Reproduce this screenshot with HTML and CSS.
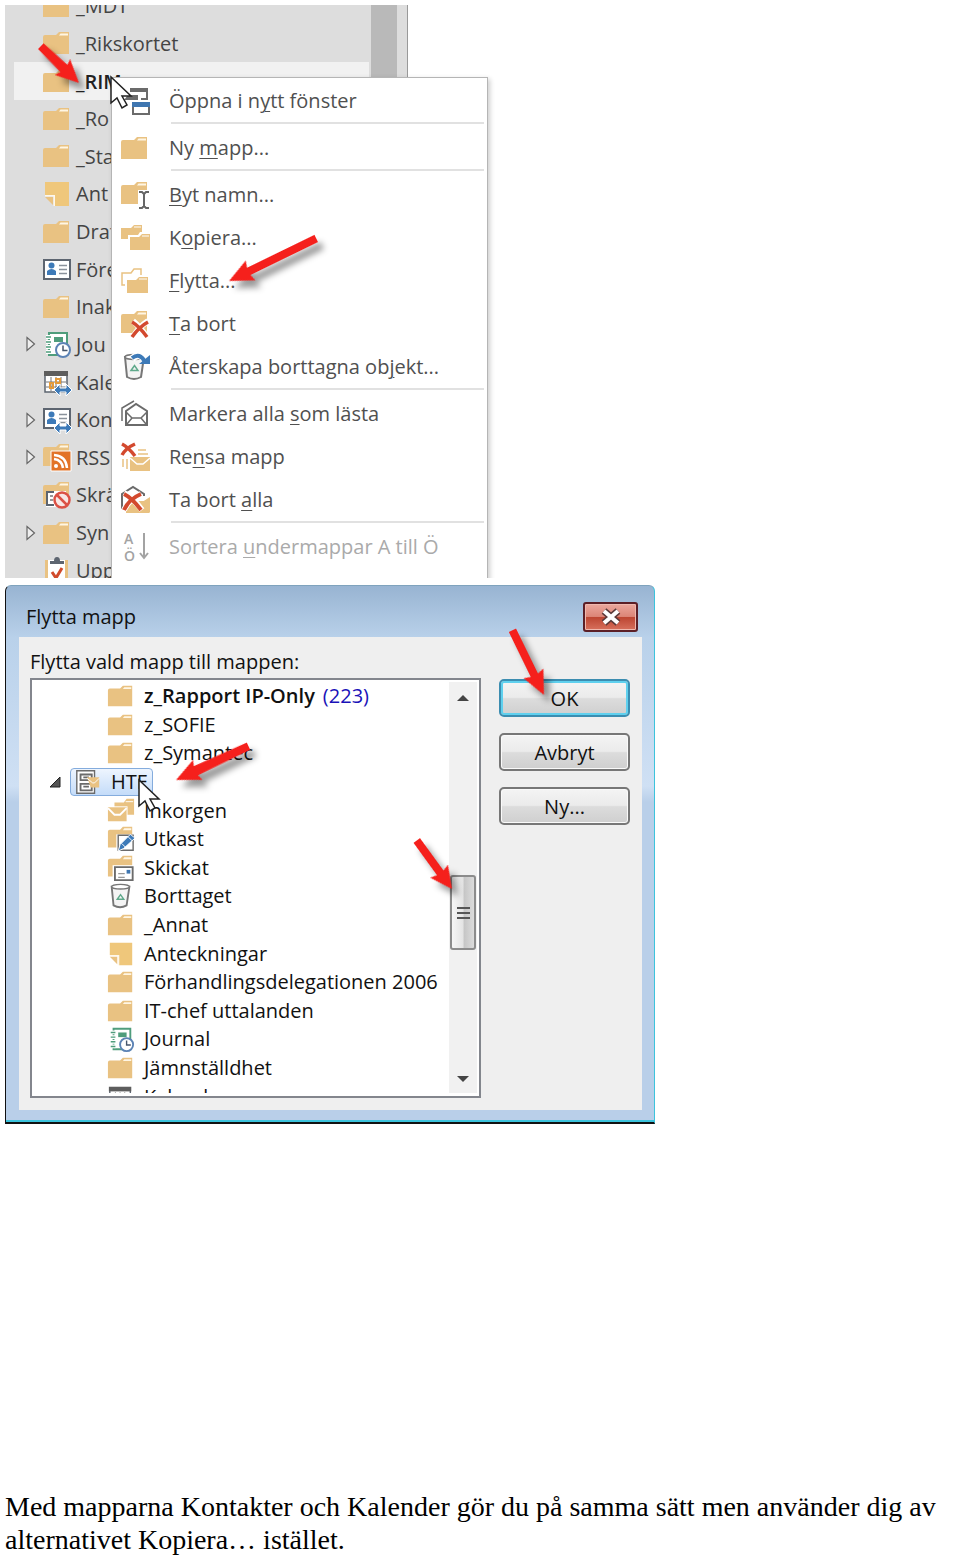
FILE: index.html
```html
<!DOCTYPE html>
<html lang="sv">
<head>
    <meta charset="UTF-8">
    <meta name="viewport" content="width=device-width, initial-scale=1.0">
    <title>Flytta mapp</title>
    <link rel="stylesheet" href="styles.css">
</head>
<body>
    <!-- Icons -->
    <svg class="sprite" aria-hidden="true">
        <symbol id="folder" viewBox="0 0 30 30">
            <path d="M1 9q0-2 2-2h11l3-3h10v22H1z" fill="#e9c282"/>
            <path d="M17 7.500l1.500-2h7.500v2z" fill="#fff6e4"/>
        </symbol>
        <symbol id="note" viewBox="0 0 30 30">
            <path d="M3 3h24v24H13V16H3z" fill="#efc77b"/>
            <path d="M3 16h10v11h-1.500v-9.500H3z" fill="#fff8ea"/>
            <path d="M3 18h8v8z" fill="#e9c282"/>
        </symbol>
        <symbol id="card" viewBox="0 0 30 30">
            <path d="M2 6h26v19H2z" fill="#fff" stroke="#5d6570" stroke-width="2"/>
            <circle cx="9.500" cy="11.500" r="3" fill="#3d7ab8"/>
            <path d="M5 21v-4q4.500-4 9 0v4z" fill="#3d7ab8"/>
            <path d="M17 11.500h8M17 15.500h8M17 19.500h8" stroke="#8a929b" stroke-width="1.500"/>
        </symbol>
        <symbol id="arrows" viewBox="0 0 30 30">
            <path d="M12 23l6-6v4h6v-4l6 6-6 6v-4h-6v4z" fill="#3d7ab8" stroke="#fff" stroke-width="1"/>
        </symbol>
        <symbol id="contacts" viewBox="0 0 30 30">
            <use href="#card" y="-2"/>
            <use href="#arrows"/>
        </symbol>
        <symbol id="journal" viewBox="0 0 30 30">
            <path d="M7 4h18v22H7z" fill="#fff" stroke="#4f9d7c" stroke-width="2"/>
            <path d="M12 8h9v5h-9z" fill="#4f9d7c"/>
            <path d="M4 8h5M4 13h5M4 18h5M4 23h5" stroke="#fff" stroke-width="4"/>
            <path d="M4 8h5M4 13h5M4 18h5M4 23h5" stroke="#4f9d7c" stroke-width="1.500"/>
            <circle cx="21" cy="21" r="7" fill="#fff" stroke="#5c83b5" stroke-width="2"/>
            <path d="M21 16.500v5h4.500" fill="none" stroke="#45566c" stroke-width="1.500"/>
        </symbol>
        <symbol id="calendar" viewBox="0 0 30 30">
            <path d="M3 5h22v20H3z" fill="#fff" stroke="#5d6570" stroke-width="1.500"/>
            <path d="M2 4h24v5H2z" fill="#5d5d5d"/>
            <path d="M4 15h20M4 20h20M9 10v14M14 10v14M19 10v14" stroke="#777"/>
            <path d="M14 12h4v4h-4zM8 16h3v5H8z" fill="none" stroke="#e39a3b" stroke-width="2"/>
            <use href="#arrows"/>
        </symbol>
        <symbol id="rss" viewBox="0 0 30 30">
            <use href="#folder" y="-2"/>
            <path d="M9 9h20v20H9z" fill="#e27327" stroke="#fff"/>
            <circle cx="14" cy="24" r="2" fill="#fff"/>
            <path d="M12 17q8 1 9 9M12 13q12 1 13 13" fill="none" stroke="#fff" stroke-width="2.500"/>
        </symbol>
        <symbol id="junk" viewBox="0 0 30 30">
            <use href="#folder" y="-2"/>
            <path d="M4 11h20v16H4z" fill="#fff"/>
            <path d="M12 12H5v13h7" fill="none" stroke="#5d6570" stroke-width="2"/>
            <path d="M8 16h3M8 20h3" stroke="#777" stroke-width="1.500"/>
            <circle cx="20" cy="20" r="7.500" fill="#f8e7e4" stroke="#db5145" stroke-width="2.500"/>
            <path d="M15 15l10 10" stroke="#db5145" stroke-width="2.500"/>
        </symbol>
        <symbol id="tasks" viewBox="0 0 30 30">
            <path d="M3 5h23v22H3z" fill="#e9c282"/>
            <path d="M6 5h17v22H6z" fill="#fff"/>
            <path d="M8 9V6h4q0-4 3-4t3 4h4v3z" fill="#5d6570"/>
            <path d="M10 17l4 6 6-10" fill="none" stroke="#d14b2c" stroke-width="3"/>
        </symbol>
        <symbol id="windows" viewBox="0 0 30 30">
            <path d="M10 2h18v12h-2V6H10z" fill="#6b6b6b"/>
            <path d="M8 9h10v5H4z" fill="#6b6b6b"/>
            <path d="M21 13h6" stroke="#6b6b6b" stroke-width="2"/>
            <path d="M13 17h16v11H13z" fill="#fff" stroke="#6b6b6b" stroke-width="2"/>
            <path d="M12 16h18v5H12z" fill="#3f76b0"/>
        </symbol>
        <symbol id="rename" viewBox="0 0 30 30">
            <use href="#folder" y="-2"/>
            <path d="M18 10h12v19H18z" fill="#fff"/>
            <path d="M19 12h3l2 2 2-2h3M24 14v12M19 28h3l2-2 2 2h3" fill="none" stroke="#666" stroke-width="2"/>
        </symbol>
        <symbol id="copy" viewBox="0 0 30 30">
            <path d="M1 5h10l3-3h8v14H1z" fill="#e9c282"/>
            <path d="M8 12h10l2-3h10v19H8z" fill="#fff"/>
            <path d="M10 14h9l3-3h8v16H10z" fill="#e9c282"/>
            <path d="M14 4h7M22 13h7" stroke="#fff"/>
        </symbol>
        <symbol id="move" viewBox="0 0 30 30">
            <path d="M5 19H2V7h9l3-4h7v6" fill="none" stroke="#e9c282" stroke-width="1.500"/>
            <path d="M7 14h9l3-3h9v16H7z" fill="#e9c282"/>
            <path d="M19 13h8" stroke="#fff"/>
        </symbol>
        <symbol id="cross" viewBox="0 0 30 30">
            <path d="M13 12q6 5 15 17M28 12q-9 6-15 16" fill="none" stroke="#fff" stroke-width="6"/>
            <path d="M12 13q7 4 15 15M28 13q-9 5-16 15" fill="none" stroke="#d3492e" stroke-width="3.500"/>
        </symbol>
        <symbol id="delete" viewBox="0 0 30 30">
            <use href="#folder" y="-2"/>
            <use href="#cross"/>
        </symbol>
        <symbol id="trash" viewBox="0 0 30 30">
            <path d="M5 5l2 20q7 4 14 0l3-20z" fill="#f4f4f4" stroke="#777" stroke-width="2"/>
            <ellipse cx="14.500" cy="5" rx="9.500" ry="2.500" fill="#fff" stroke="#777" stroke-width="1.500"/>
            <path d="M11 18.500l3.500-5 3.500 5z" fill="none" stroke="#5fa98b" stroke-width="1.500"/>
        </symbol>
        <symbol id="restore" viewBox="0 0 30 30">
            <use href="#trash"/>
            <path d="M12 7q8-8 14 3" fill="none" stroke="#fff" stroke-width="7"/>
            <path d="M12 6q8-6 13 4" fill="none" stroke="#3d7ab8" stroke-width="4"/>
            <path d="M19 12h11V3z" fill="#3d7ab8"/>
        </symbol>
        <symbol id="read" viewBox="0 0 30 30">
            <path d="M2 22V9L14 2" fill="none" stroke="#6b6b6b" stroke-width="1.500"/>
            <path d="M6 12l10-7 11 7v14H6z" fill="#fff" stroke="#6b6b6b" stroke-width="2"/>
            <path d="M6 13l6 6h9l6-6M7 25l5-6M26 25l-5-6" fill="none" stroke="#6b6b6b" stroke-width="1.500"/>
        </symbol>
        <symbol id="clean" viewBox="0 0 30 30">
            <path d="M2 2q6 3 13 12M15 2Q6 6 2 13" fill="none" stroke="#d3492e" stroke-width="3.500"/>
            <path d="M18 8h8M18 12h10M3 17v8M7 17v10" stroke="#e9c282" stroke-width="1.500"/>
            <path d="M10 15h20v14H10z" fill="#e9c282"/>
            <path d="M10 16l7 6h6l7-6" fill="none" stroke="#fff" stroke-width="1.500"/>
        </symbol>
        <symbol id="delete-all" viewBox="0 0 30 30">
            <path d="M6 28V16h23v12z" fill="#e9c282"/>
            <path d="M30 12v16L19 19z" fill="#e9c282"/>
            <path d="M2 24V9l11-7 11 7v2" fill="none" stroke="#6b6b6b" stroke-width="2"/>
            <path d="M4 8q8 4 18 17M21 9Q9 14 4 25" fill="none" stroke="#fff" stroke-width="6"/>
            <path d="M4 9q8 4 17 16M21 9Q9 14 4 25" fill="none" stroke="#d3492e" stroke-width="4"/>
        </symbol>
        <symbol id="sort" viewBox="0 0 30 30">
            <text x="4" y="12" class="sort-letter">A</text>
            <text x="4" y="29" class="sort-letter">Ö</text>
            <path d="M24 1v25M20 21l4 5 4-5" fill="none" stroke="#a3a3a3" stroke-width="2"/>
        </symbol>
        <symbol id="mailbox" viewBox="0 0 30 30">
            <path d="M3 3h19v24H3z" fill="#fff" stroke="#6b6b6b" stroke-width="1.500"/>
            <path d="M7 7h12v6H7zM7 17h12v7H7z" fill="#fff" stroke="#6b6b6b" stroke-width="2"/>
            <path d="M10 10h6M10 20h6" stroke="#6b6b6b" stroke-width="2"/>
            <path d="M14 10h13v11h-9z" fill="#e9c282"/>
            <path d="M14 11l6 5h2l5-5" fill="none" stroke="#fff"/>
        </symbol>
        <symbol id="inbox" viewBox="0 0 30 30">
            <path d="M8 6h10l3-4h8v17H8z" fill="#e9c282"/>
            <path d="M20 5h8" stroke="#fff"/>
            <path d="M0 10h22v17H0z" fill="#fff"/>
            <path d="M1 11h20v15H1z" fill="#e9c282"/>
            <path d="M1 12l7 7h6l7-7" fill="none" stroke="#fff" stroke-width="2"/>
        </symbol>
        <symbol id="drafts" viewBox="0 0 30 30">
            <use href="#folder" y="-2"/>
            <path d="M10 10h20v20H10z" fill="#fff"/>
            <path d="M12 11h16v16H12z" fill="#fff" stroke="#6b6b6b" stroke-width="1.500"/>
            <path d="M12 28l2-7L25 10l5 4-12 11z" fill="#3d7ab8" stroke="#fff"/>
            <path d="M16 20l4 4M23 13l4 4" stroke="#fff"/>
        </symbol>
        <symbol id="sent" viewBox="0 0 30 30">
            <use href="#folder" y="-2"/>
            <path d="M6 12h24v18H6z" fill="#fff"/>
            <path d="M8.500 14h19v14h-19z" fill="#fff" stroke="#6b6b6b" stroke-width="2"/>
            <path d="M12 21h7M12 25h7" stroke="#999" stroke-width="1.500"/>
            <path d="M21 17h4v4h-4z" fill="#3f76b0"/>
        </symbol>
        <symbol id="closed" viewBox="0 0 10 16">
            <path d="M1 1.500l7.500 6.500L1 14.500z" fill="#eee" stroke="#666" stroke-width="1.200"/>
        </symbol>
        <symbol id="pointer" viewBox="0 0 24 36">
            <path d="M2 2v26l6-5 5 10 5-3-5-9h9z" fill="#fff" stroke="#222" stroke-width="1.500"/>
        </symbol>
    </svg>

    <!-- Folder list with context menu -->
    <section class="mail">
        <nav class="pane">
            <ul class="folders">
                <li><span class="twist"></span><svg class="icon"><use href="#folder"/></svg>_MDT</li>
                <li><span class="twist"></span><svg class="icon"><use href="#folder"/></svg>_Rikskortet</li>
                <li class="current"><span class="twist"></span><svg class="icon"><use href="#folder"/></svg>_RIM</li>
                <li><span class="twist"></span><svg class="icon"><use href="#folder"/></svg>_Ro</li>
                <li><span class="twist"></span><svg class="icon"><use href="#folder"/></svg>_Sta</li>
                <li><span class="twist"></span><svg class="icon"><use href="#note"/></svg>Ant</li>
                <li><span class="twist"></span><svg class="icon"><use href="#folder"/></svg>Draf</li>
                <li><span class="twist"></span><svg class="icon"><use href="#card"/></svg>Före</li>
                <li><span class="twist"></span><svg class="icon"><use href="#folder"/></svg>Inak</li>
                <li><span class="twist"><svg width="10" height="16"><use href="#closed"/></svg></span><svg class="icon"><use href="#journal"/></svg>Jou</li>
                <li><span class="twist"></span><svg class="icon"><use href="#calendar"/></svg>Kale</li>
                <li><span class="twist"><svg width="10" height="16"><use href="#closed"/></svg></span><svg class="icon"><use href="#contacts"/></svg>Kon</li>
                <li><span class="twist"><svg width="10" height="16"><use href="#closed"/></svg></span><svg class="icon"><use href="#rss"/></svg>RSS</li>
                <li><span class="twist"></span><svg class="icon"><use href="#junk"/></svg>Skrä</li>
                <li><span class="twist"><svg width="10" height="16"><use href="#closed"/></svg></span><svg class="icon"><use href="#folder"/></svg>Syn</li>
                <li><span class="twist"></span><svg class="icon"><use href="#tasks"/></svg>Upp</li>
            </ul>
            <div class="pane-scroll"></div>
        </nav>

        <div class="menu">
            <button class="item"><svg class="icon"><use href="#windows"/></svg><span>Öppna i n<u>y</u>tt fönster</span></button>
            <hr>
            <button class="item"><svg class="icon"><use href="#folder"/></svg><span>Ny <u>m</u>app...</span></button>
            <hr>
            <button class="item"><svg class="icon"><use href="#rename"/></svg><span><u>B</u>yt namn...</span></button>
            <button class="item"><svg class="icon"><use href="#copy"/></svg><span>K<u>o</u>piera...</span></button>
            <button class="item"><svg class="icon"><use href="#move"/></svg><span><u>F</u>lytta...</span></button>
            <button class="item"><svg class="icon"><use href="#delete"/></svg><span><u>T</u>a bort</span></button>
            <button class="item"><svg class="icon"><use href="#restore"/></svg><span>Återskapa borttagna ob<u>j</u>ekt...</span></button>
            <hr>
            <button class="item"><svg class="icon"><use href="#read"/></svg><span>Markera alla <u>s</u>om lästa</span></button>
            <button class="item"><svg class="icon"><use href="#clean"/></svg><span>Re<u>n</u>sa mapp</span></button>
            <button class="item"><svg class="icon"><use href="#delete-all"/></svg><span>Ta bort <u>a</u>lla</span></button>
            <hr>
            <button class="item" disabled><svg class="icon"><use href="#sort"/></svg><span>Sortera <u>u</u>ndermappar A till Ö</span></button>
        </div>

        <svg class="marks" aria-hidden="true">
            <use href="#pointer" x="104" y="70" width="24" height="36"/>
            <g class="red">
                <polygon points="0,0 -23,-11 -21,-5 -53,-4 -53,4 -21,5 -23,11" transform="translate(74 78) rotate(44)"/>
                <polygon points="0,0 -24,-11 -22,-4 -97,-4 -97,4 -22,4 -24,11" transform="translate(224 276) rotate(154)"/>
            </g>
        </svg>
    </section>

    <!-- Move folder dialog -->
    <section class="dialog">
        <header class="titlebar">
            <h1>Flytta mapp</h1>
            <button class="close" aria-label="Stäng">
                <svg width="24" height="18" viewBox="0 0 24 18"><path d="M5 3l14 12M19 3L5 15" stroke="#5b3a3a" stroke-width="7"/><path d="M5 3l14 12M19 3L5 15" stroke="#fff" stroke-width="4"/></svg>
            </button>
        </header>
        <div class="client">
            <div class="chooser">
                <h2 id="tree-label">Flytta vald mapp till mappen:</h2>
                <div class="listbox">
                    <div class="view">
                        <ul class="tree" aria-labelledby="tree-label">
                            <li><svg class="icon"><use href="#folder"/></svg><b>z_Rapport IP-Only</b><span class="count">(223)</span></li>
                            <li><svg class="icon"><use href="#folder"/></svg>z_SOFIE</li>
                            <li><svg class="icon"><use href="#folder"/></svg>z_Symantec</li>
                            <li class="root"><svg class="open" width="12" height="12" viewBox="0 0 12 12"><path d="M11 1v10H1z" fill="#555" stroke="#222"/></svg><span class="selected"><svg class="icon"><use href="#mailbox"/></svg>HTF</span></li>
                            <li><svg class="icon"><use href="#inbox"/></svg>Inkorgen</li>
                            <li><svg class="icon"><use href="#drafts"/></svg>Utkast</li>
                            <li><svg class="icon"><use href="#sent"/></svg>Skickat</li>
                            <li><svg class="icon"><use href="#trash"/></svg>Borttaget</li>
                            <li><svg class="icon"><use href="#folder"/></svg>_Annat</li>
                            <li><svg class="icon"><use href="#note"/></svg>Anteckningar</li>
                            <li><svg class="icon"><use href="#folder"/></svg>Förhandlingsdelegationen 2006</li>
                            <li><svg class="icon"><use href="#folder"/></svg>IT-chef uttalanden</li>
                            <li><svg class="icon"><use href="#journal"/></svg>Journal</li>
                            <li><svg class="icon"><use href="#folder"/></svg>Jämnställdhet</li>
                            <li><svg class="icon"><use href="#calendar"/></svg>Kalender</li>
                        </ul>
                    </div>
                    <div class="scrollbar">
                        <svg width="14" height="8" viewBox="0 0 14 8"><path d="M1 7l6-6 6 6z" fill="#444"/></svg>
                        <div class="thumb"><i></i><i></i><i></i></div>
                        <svg width="14" height="8" viewBox="0 0 14 8"><path d="M1 1h12L7 7z" fill="#444"/></svg>
                    </div>
                </div>
            </div>
            <div class="buttons">
                <button class="btn default">OK</button>
                <button class="btn">Avbryt</button>
                <button class="btn">Ny...</button>
            </div>
        </div>

        <svg class="marks" aria-hidden="true">
            <use href="#pointer" x="131" y="192" width="24" height="36"/>
            <g class="red">
                <polygon points="0,0 -24,-11 -22,-4 -72,-4 -72,4 -22,4 -24,11" transform="translate(538 109) rotate(64)"/>
                <polygon points="0,0 -24,-11 -22,-5 -80,-4 -80,4 -22,5 -24,11" transform="translate(170 194) rotate(155)"/>
                <polygon points="0,0 -22,-11 -20,-4 -60,-4 -60,4 -20,4 -22,11" transform="translate(446 303) rotate(54)"/>
            </g>
        </svg>
    </section>

    <p class="text">Med mapparna Kontakter och Kalender gör du på samma sätt men använder dig av alternativet Kopiera… istället.</p>
</body>
</html>
```
FILE: styles.css
```css
* {
    margin: 0;
    padding: 0;
    box-sizing: border-box;
}

body {
    font-family: "Open Sans", "Noto Sans", sans-serif;
    font-size: 20px;
    color: #111;
    background: #fff;
    padding: 5px 0 0 5px;
}

button {
    font: inherit;
    color: inherit;
}

ul {
    list-style: none;
}

b {
    font-weight: 600;
}

.sprite {
    position: absolute;
    width: 0;
    height: 0;
}

.icon {
    width: 30px;
    height: 30px;
    flex: none;
}

.sort-letter {
    font-size: 14px;
    font-weight: 600;
    fill: #a3a3a3;
}

/* arrows and pointers on top of a window */
.marks {
    position: absolute;
    top: 0;
    left: 0;
    width: 100%;
    height: 100%;
    pointer-events: none;
}

.red {
    fill: #f5201c;
    filter: drop-shadow(6px 7px 3px rgba(0, 0, 0, 0.4));
}

/* folder list */
.mail {
    position: relative;
    max-width: 490px;
    height: 573px;
    overflow: hidden;
}

.pane {
    display: flex;
    max-width: 403px;
    height: 100%;
    background: #ddd;
    border-right: 1px solid #999;
}

.folders {
    flex: 1;
    display: flex;
    flex-direction: column;
    height: 602px;
    margin-top: -18px;
    padding-left: 9px;
    color: #444;
}

.folders li {
    flex: 1;
    display: flex;
    align-items: center;
    white-space: nowrap;
}

.folders .icon {
    margin-right: 4px;
}

.folders .current {
    background: #f1f1f1;
    color: #222;
    font-weight: 600;
}

.twist {
    display: flex;
    width: 28px;
    padding-left: 12px;
}

.pane-scroll {
    width: 26px;
    margin: 0 10px 0 2px;
    background: #b9b9b9;
}

.menu {
    position: absolute;
    top: 72px;
    left: 106px;
    width: 377px;
    padding: 1px 3px 40px 6px;
    background: #fff;
    border: 1px solid #b5b5b5;
    box-shadow: 2px 2px 5px rgba(0, 0, 0, 0.2);
    color: #505050;
}

.item {
    display: flex;
    align-items: center;
    gap: 19px;
    width: 100%;
    height: 43px;
    padding-left: 2px;
    background: none;
    border: none;
    text-align: left;
}

.item:disabled {
    color: #aaa;
}

.menu u {
    text-decoration-thickness: 1px;
    text-underline-offset: 3px;
}

.menu hr {
    height: 2px;
    margin: 0 0 2px 53px;
    border: none;
    background: #e1e1e1;
}

/* dialog */
.dialog {
    position: relative;
    max-width: 650px;
    margin-top: 7px;
    padding: 0 12px 12px 13px;
    background: linear-gradient(#98b4d2, #b9d1ea 52px, #cfe0f4 200px, #b9cfe9 216px);
    border: 1px solid #111;
    border-color: #7fa3bd #3cc3dc #111 #111;
    border-bottom-width: 2px;
    border-radius: 6px 6px 0 0;
    box-shadow: inset 0 -2px #3cc3dc;
}

.titlebar {
    display: flex;
    justify-content: space-between;
    align-items: center;
    height: 51px;
    padding: 10px 4px 0 7px;
}

.titlebar h1 {
    font-size: 20px;
    font-weight: normal;
}

.close {
    display: flex;
    align-items: center;
    justify-content: center;
    width: 55px;
    height: 30px;
    border: 2px solid #5c1f26;
    border-radius: 3px;
    background: linear-gradient(#eba89d, #dc8577 48%, #bd4632 52%, #d7705d);
    box-shadow: inset 0 0 0 1px #efb8ae;
}

.client {
    display: flex;
    gap: 18px;
    padding: 11px 12px 12px 11px;
    background: #efefef;
}

.chooser {
    flex: 1;
}

.chooser h2 {
    font-size: 20px;
    font-weight: normal;
    line-height: 28px;
    margin-bottom: 2px;
}

.listbox {
    display: flex;
    height: 420px;
    padding: 2px 2px 3px 0;
    background: #fff;
    border: 2px solid #83868d;
}

.view {
    flex: 1;
    overflow: hidden;
}

.tree {
    display: flex;
    flex-direction: column;
    height: 429px;
}

.tree li {
    flex: 1;
    display: flex;
    align-items: center;
    min-height: 0;
    padding-left: 74px;
    white-space: nowrap;
    line-height: 28px;
}

.tree .icon {
    height: 28px;
    margin-right: 8px;
}

.tree .root {
    padding-left: 17px;
}

.count {
    margin-left: 8px;
    color: #1a12b8;
}

.selected {
    display: flex;
    align-items: center;
    height: 28px;
    margin-left: 9px;
    padding: 0 5px 0 2px;
    border: 1px solid #84acdd;
    border-radius: 4px;
    background: linear-gradient(#eef5fe, #c4dcf9);
}

.scrollbar {
    display: flex;
    flex-direction: column;
    align-items: center;
    justify-content: space-between;
    width: 28px;
    padding: 12px 0 10px;
    background: #f1f1f1;
}

.thumb {
    display: flex;
    flex-direction: column;
    align-items: center;
    justify-content: center;
    gap: 3px;
    width: 26px;
    height: 75px;
    margin-top: 48px;
    border: 2px solid #8c8c8c;
    border-radius: 3px;
    background: linear-gradient(90deg, #f6f6f6, #e4e4e4 50%, #c6c6c6 55%, #dcdcdc);
}

.thumb i {
    width: 13px;
    height: 2px;
    background: #555;
}

.buttons {
    display: flex;
    flex-direction: column;
    gap: 16px;
    width: 131px;
    padding-top: 31px;
}

.btn {
    height: 38px;
    border: 2px solid #777;
    border-radius: 5px;
    background: linear-gradient(#f4f4f4, #ebebeb 48%, #dcdcdc 52%, #cfcfcf);
    box-shadow: inset 0 0 0 1px #fafafa;
}

.default {
    border-color: #3c8db0;
    box-shadow: inset 0 0 0 2px #5fd0ee;
}

.text {
    margin-top: 366px;
    font-family: "Liberation Serif", serif;
    font-size: 28px;
    line-height: 33px;
    color: #000;
}
```
